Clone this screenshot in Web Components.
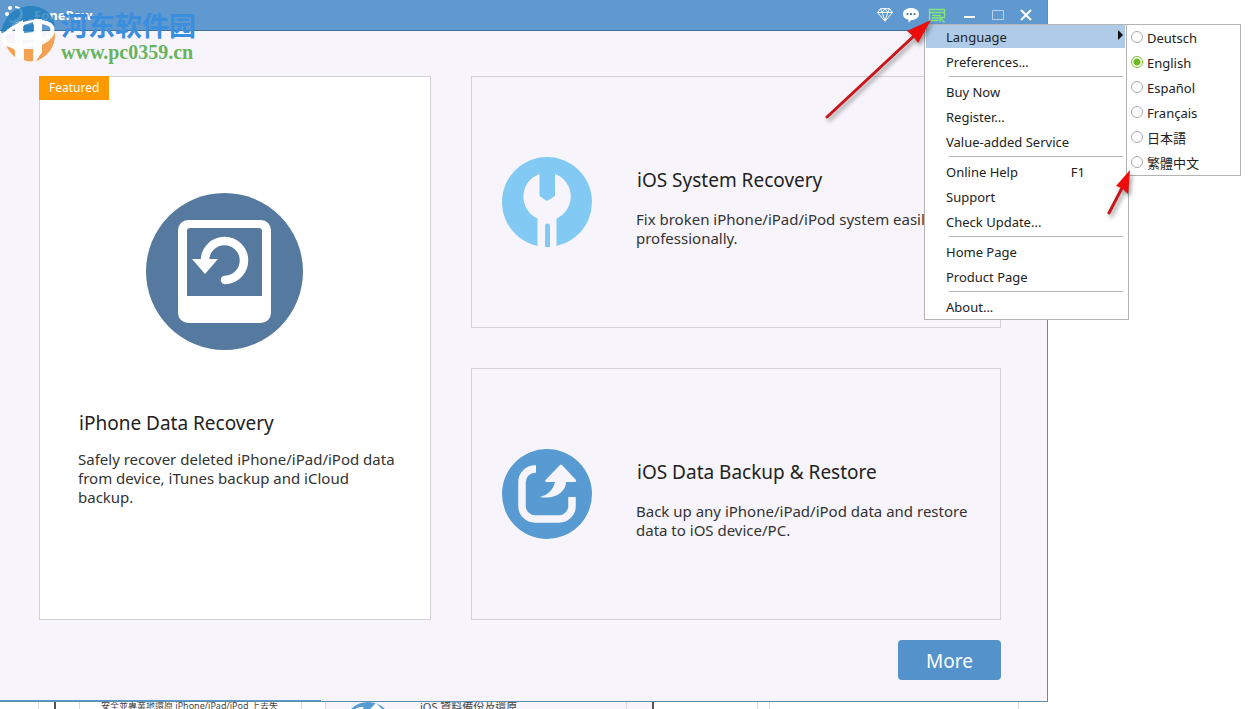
<!DOCTYPE html>
<html lang="en">
<head>
<meta charset="utf-8">
<title>FonePaw</title>
<style>
  body { margin: 0; background: #fff; color: #222; font-family: "Noto Sans", "Noto Sans CJK SC", sans-serif; overflow: hidden; }
</style>
</head>
<body>
<fp-desktop></fp-desktop>

<script>
const define = (name, html, setup) => {
  const template = document.createElement('template');
  template.innerHTML = html;
  customElements.define(name, class extends HTMLElement {
    constructor() {
      super();
      this.attachShadow({ mode: 'open' }).append(template.content.cloneNode(true));
    }
    connectedCallback() { if (setup) setup(this, this.shadowRoot); }
  });
};

/* Title bar button with an icon in its slot */
define('fp-tool', `
<style>
  :host { display: block; }
  button { display: grid; place-items: center; width: 100%; height: 30px; margin: 0; padding: 0; border: 0; background: none; color: inherit; }
</style>
<button type="button"><slot></slot></button>`,
(host, root) => root.querySelector('button').setAttribute('aria-label', host.getAttribute('label')));

define('fp-titlebar', `
<style>
  :host { display: flex; align-items: center; height: 30px; padding: 0 7px 0 4px; background: #6099cf; border-bottom: 1px solid #3d6f9c; color: #fff; }
  .name { flex: 1; display: flex; align-items: center; gap: 10px; font-size: 13px; font-weight: 700; line-height: 16px; }
  fp-tool { width: 26px; }
  .win { width: 28px; }
  .min { margin-left: 6px; }
  svg { display: block; }
</style>
<div class="name">
  <svg width="20" height="20" viewBox="0 0 20 20" fill="#fff"><circle cx="3" cy="9" r="2"/><circle cx="6" cy="3" r="2"/><path d="M11 1c5 0 8 4 8 8 0 5-4 9-9 9-3 0-5-1-5-3 2 1 4 1 6 0 4-1 5-4 5-7s-2-5-5-5z"/><path d="M14 12l1 2 2 .3-1.500 1.500.3 2.200-1.800-1-2 1 .3-2.200-1.300-1.500 2-.3z"/></svg>
  <span>FonePaw</span>
</div>
<fp-tool label="Buy"><svg width="16" height="14" viewBox="0 0 16 14" fill="none" stroke="#fff"><path d="M3.500.7h9L15.500 4.500 8 13.300.5 4.500zM.5 4.500h15M3.500.7l1.700 3.800L8 13l2.800-8.500L12.500.7M5.200 4.500L8 .7l2.800 3.800"/></svg></fp-tool>
<fp-tool label="Feedback"><svg width="16" height="15" viewBox="0 0 16 15"><path d="M8 0c4.500 0 8 2.500 8 6s-3.500 6-7.500 6L5.500 14.500V11.600C2 11 0 9 0 6c0-3.500 3.500-6 8-6z" fill="#fff"/><path d="M3.500 5h2v2h-2zM7 5h2v2H7zM10.500 5h2v2h-2z" fill="#5c80a8"/></svg></fp-tool>
<fp-tool label="Menu"><svg width="18" height="15" viewBox="0 0 18 15" fill="none" stroke="#84e878" stroke-width="1.300"><path d="M10.500 12.500H1.500V1.500h15v7M1.500 4.500h15M4 7.500h9M4 10h7M12 14V9.500h5M12 9.500l4.500 5"/></svg></fp-tool>
<fp-tool class="win min" label="Minimize"><svg width="12" height="14" viewBox="0 0 12 14"><path d="M0 8h11v2H0z" fill="#fff"/></svg></fp-tool>
<fp-tool class="win" label="Maximize"><svg width="12" height="11" viewBox="0 0 12 11"><path d="M.5.5h11v9H.5z" fill="none" stroke="#b9d3ec"/></svg></fp-tool>
<fp-tool class="win" label="Close"><svg width="12" height="12" viewBox="0 0 12 12"><path d="M1 1l10 10M11 1L1 11" stroke="#fff" stroke-width="2"/></svg></fp-tool>`);

/* Feature card: slots for icon, title and description */
define('fp-card', `
<style>
  :host { display: flex; box-sizing: border-box; border: 1px solid #d4d2d8; position: relative; }
  .text { flex: 1; min-width: 0; }
  h2 { margin: 0; padding-left: 1px; font-size: 19px; font-weight: 400; line-height: 26px; color: #222; }
  p { margin: 0; font-size: 15px; line-height: 19px; color: #333; }
  ::slotted(svg) { display: block; flex: none; }
  :host([wide]) { align-items: center; padding: 0 12px 0 30px; gap: 44px; }
  :host([wide]) h2 { margin-bottom: 17px; }
  :host([wide]) .text { padding-top: 10px; }
  :host([tall]) { flex-direction: column; background: #fff; padding: 116px 30px 0 38px; }
  :host([tall]) .icon { align-self: center; padding-right: 30px; margin-bottom: 60px; }
  :host([tall]) h2 { margin-bottom: 14px; }
  :host([tall]) .text { flex: none; }
</style>
<slot name="badge"></slot>
<div class="icon"><slot name="icon"></slot></div>
<div class="text"><h2><slot name="title"></slot></h2><p><slot></slot></p></div>`);

define('fp-badge', `
<style>
  :host { display: block; position: absolute; top: -1px; left: -1px; padding: 0 10px; background: #ff9900; color: #fff; font-size: 12px; line-height: 24px; }
</style><slot></slot>`);

define('fp-menu-item', `
<style>
  :host { display: block; }
  button { display: flex; align-items: center; width: 100%; height: 25px; margin: 0; padding: 0 4px 0 21px; border: 0; background: none; font: inherit; color: inherit; text-align: left; }
  .label { flex: 1; }
  .key { padding-right: 39px; }
  .key:empty { display: none; }
  .arrow { display: none; margin-bottom: 3px; margin-right: 2px; width: 0; height: 0; border: 5px solid transparent; border-left-color: #111; border-right: 0; }
  :host([open]) button { background: #b0cbe7; margin: 0 3px 0 1px; width: calc(100% - 4px); height: 23px; padding-left: 20px; padding-right: 0; }
  :host([open]) { height: 24px; }
  :host([open]) .arrow { display: block; }
</style>
<button type="button"><span class="label"><slot></slot></span><span class="key"></span><span class="arrow"></span></button>`,
(host, root) => { root.querySelector('.key').textContent = host.getAttribute('key') || ''; });

define('fp-language-menu', `
<style>
  :host { display: block; box-sizing: border-box; width: 115px; border: 1px solid #b4b4b4; background: #fff; }
  label { display: flex; align-items: center; gap: 4px; height: 25px; padding-left: 4px; }
  input { appearance: none; box-sizing: border-box; width: 12px; height: 12px; margin: 0 0 2px; border: 1px solid #aaa; border-radius: 50%; background: #fff; }
  input:checked { border-color: #7cc02c; background: radial-gradient(circle, #6fb81f 0 3px, #fff 4px); }
</style>
<label><input type="radio" name="lang">Deutsch</label>
<label><input type="radio" name="lang" checked>English</label>
<label><input type="radio" name="lang">Español</label>
<label><input type="radio" name="lang">Français</label>
<label lang="ja"><input type="radio" name="lang">日本語</label>
<label lang="zh-Hant"><input type="radio" name="lang">繁體中文</label>`);

define('fp-menu', `
<style>
  :host { display: block; box-sizing: border-box; width: 205px; border: 1px solid #b4b4b4; background: #fff; font-size: 13px; line-height: 18px; color: #222; }
  hr { height: 1px; margin: 2px 5px 2px 24px; border: 0; background: #b4b4b4; }
  fp-language-menu { position: absolute; top: -1px; left: 201px; }
</style>
<fp-menu-item open>Language</fp-menu-item>
<fp-menu-item>Preferences...</fp-menu-item>
<hr>
<fp-menu-item>Buy Now</fp-menu-item>
<fp-menu-item>Register...</fp-menu-item>
<fp-menu-item>Value-added Service</fp-menu-item>
<hr>
<fp-menu-item key="F1">Online Help</fp-menu-item>
<fp-menu-item>Support</fp-menu-item>
<fp-menu-item>Check Update...</fp-menu-item>
<hr>
<fp-menu-item>Home Page</fp-menu-item>
<fp-menu-item>Product Page</fp-menu-item>
<hr>
<fp-menu-item>About...</fp-menu-item>
<fp-language-menu></fp-language-menu>`);

define('fp-watermark', `
<style>
  :host { display: flex; align-items: center; gap: 5px; pointer-events: none; }
  svg { display: block; }
  .cn { font: 700 27px/32px "Noto Sans CJK SC", sans-serif; color: #3a8ede; }
  .url { font: 700 20px/22px "Liberation Serif", serif; color: #68b35e; }
  .words { padding-top: 4px; }
</style>
<svg width="56" height="58" viewBox="0 0 56 58">
  <path d="M1 28C4 10 16 1 31 1c13 0 23 9 24 20-6-2-12-3-18-2v-5h-7l-9 6v-4l-9 3v7z" fill="#1f7dbd" opacity=".8"/>
  <path d="M6 40l9 5v7c-4-3-7-7-9-12zM24 44h9v12c-3 1-7 0-9-1zM42 40c6-3 11-7 13-13 1 14-7 25-19 29 4-5 6-10 6-16z" fill="#f4a152"/>
  <ellipse cx="28" cy="29" rx="25" ry="11" transform="rotate(-14 28 29)" fill="none" stroke="#fff" stroke-width="4"/>
  <path d="M15 20l8-5v39l-8-3zM34 14h8v34l-8 7zM23 28h12v7H23z" fill="#fff"/>
  <path d="M24 20l9-3v10l-9 1z" fill="#1f7dbd" opacity=".8"/>
</svg>
<div class="words"><div class="cn" lang="zh-Hans">河东软件园</div><div class="url">www.pc0359.cn</div></div>`);

define('fp-pointers', `
<style>
  :host { display: block; pointer-events: none; }
  svg { display: block; filter: drop-shadow(2px 3px 2px #0006); }
</style>
<svg width="320" height="230" viewBox="0 0 320 230" stroke-linecap="round">
  <g stroke="#c9161c" stroke-width="3"><path d="M3 117L92 34M285 213l13-25"/></g>
  <g fill="#f00b0b"><path d="M107 20L83 31l6 5 5 7z"/><path d="M306 170l-14 16 6 2 6 6z"/></g>
</svg>`);

define('fp-window', `
<style>
  :host { display: block; position: relative; background: linear-gradient(#589bd3, #589bd3) left bottom / 321px 1px no-repeat #f7f5fb; border-right: 1px solid #5b8fab; border-bottom: 1px solid #5b8fab; }
  main { display: grid; grid-template-columns: 392fr 530fr; grid-template-rows: 252px 252px; gap: 40px; padding: 45px 46px 20px 39px; }
  fp-card[tall] { grid-row: span 2; }
  footer { display: flex; justify-content: flex-end; padding: 0 46px 21px 0; }
  .more { height: 40px; padding: 2px 0 0; width: 103px; border: 0; border-radius: 4px; background: #5392ca; color: #fff; font: inherit; font-size: 19px; line-height: 26px; }
  fp-menu { position: absolute; top: 24px; left: calc(100% - 123px); }
  fp-watermark { position: absolute; top: 5px; left: 0; }
  fp-pointers { position: absolute; top: 0; left: calc(100% - 223px); }
</style>
<fp-titlebar></fp-titlebar>
<main>
  <fp-card tall>
    <fp-badge slot="badge">Featured</fp-badge>
    <svg slot="icon" width="157" height="157" viewBox="0 0 157 157">
      <circle cx="78.500" cy="78.500" r="78.500" fill="#56799f"/>
      <path d="M42 27h73a10 10 0 0 1 10 10v83a10 10 0 0 1-10 10H42a10 10 0 0 1-10-10V37a10 10 0 0 1 10-10zm2 8a3 3 0 0 0-3 3v65h75V38a3 3 0 0 0-3-3z" fill="#fff" fill-rule="evenodd"/>
      <path d="M59 67a19.500 19.500 0 1 1 20 20" fill="none" stroke="#fff" stroke-width="8.500" stroke-linecap="round"/>
      <path d="M46 66h26L59 81z" fill="#fff"/>
    </svg>
    <span slot="title">iPhone Data Recovery</span>
    Safely recover deleted iPhone/iPad/iPod data from device, iTunes backup and iCloud backup.
  </fp-card>
  <fp-card wide>
    <svg slot="icon" width="90" height="90" viewBox="0 0 90 90">
      <circle cx="45" cy="45" r="45" fill="#82caf3"/>
      <path d="M37.500 17a24 24 0 0 0-2 44.500V90h19V61.500a24 24 0 0 0-1.500-44.500v22L45 44l-7.500-5z" fill="#f7f5fb"/>
      <path d="M43 90V69a2.500 2.500 0 0 1 5 0v21z" fill="#82caf3"/>
    </svg>
    <span slot="title">iOS System Recovery</span>
    Fix broken iPhone/iPad/iPod system easily and professionally.
  </fp-card>
  <fp-card wide>
    <svg slot="icon" width="90" height="90" viewBox="0 0 90 90">
      <circle cx="45" cy="45" r="45" fill="#589bd3"/>
      <path d="M34 20h-1a13 13 0 0 0-13 13v24a13 13 0 0 0 13 13h24a13 13 0 0 0 13-13v-9" fill="none" stroke="#f7f5fb" stroke-width="7.500"/>
      <path d="M58 16q1-.8 2 0l14 15q.7 2-1.500 2H64c0 9-10 18-26 15 8-2 13-7 15-15h-8q-2.500 0-1.500-2z" fill="#f7f5fb"/>
    </svg>
    <span slot="title">iOS Data Backup &amp; Restore</span>
    Back up any iPhone/iPad/iPod data and restore data to iOS device/PC.
  </fp-card>
</main>
<footer><button class="more" type="button">More</button></footer>
<fp-watermark></fp-watermark>
<fp-menu></fp-menu>
<fp-pointers></fp-pointers>`);

/* Top edge of the window that lies behind the main one */
define('fp-behind', `
<style>
  :host { display: flex; height: 7px; overflow: hidden; font-size: 9px; line-height: 8px; color: #444; }
  div { box-sizing: border-box; flex: none; border-right: 1px solid #dcdae0; white-space: nowrap; }
  .a { width: 39px; } .b { width: 17px; border-right: 2px solid #555; margin-right: 23px; }
  .panel { width: 223px; border-left: 1px solid #dcdae0; padding-left: 21px; }
  .tinted { display: flex; background: #f7f5fb; }
  .gap { width: 24px; } .second { width: 301px; display: flex; gap: 28px; padding-left: 18px; font-size: 11px; line-height: 9px; }
  .second svg { display: block; }
  .end { width: 27px; border-right: 2px solid #555; }
  .c { width: 104px; } .d { width: 12px; } .e { width: 249px; }
</style>
<div class="a"></div><div class="b"></div>
<div class="panel" lang="zh-Hant">安全並專業地還原 iPhone/iPad/iPod 上丟失</div>
<div class="gap"></div>
<div class="tinted second"><svg width="48" height="48" viewBox="0 0 90 90"><circle cx="45" cy="45" r="45" fill="#589bd3"/><path d="M36 13q-18 0-20 20" fill="none" stroke="#fff" stroke-width="8"/><path d="M60 2l20 20H40z" fill="#fff"/></svg><span lang="zh-Hant">iOS 資料備份及還原</span></div>
<div class="tinted end"></div>
<div class="c"></div><div class="d"></div><div class="e"></div>`);

define('fp-desktop', `
<style>
  :host { display: block; }
  fp-window { margin-right: 208px; z-index: 1; }
</style>
<fp-window></fp-window>
<fp-behind></fp-behind>`);
</script>
</body>
</html>
